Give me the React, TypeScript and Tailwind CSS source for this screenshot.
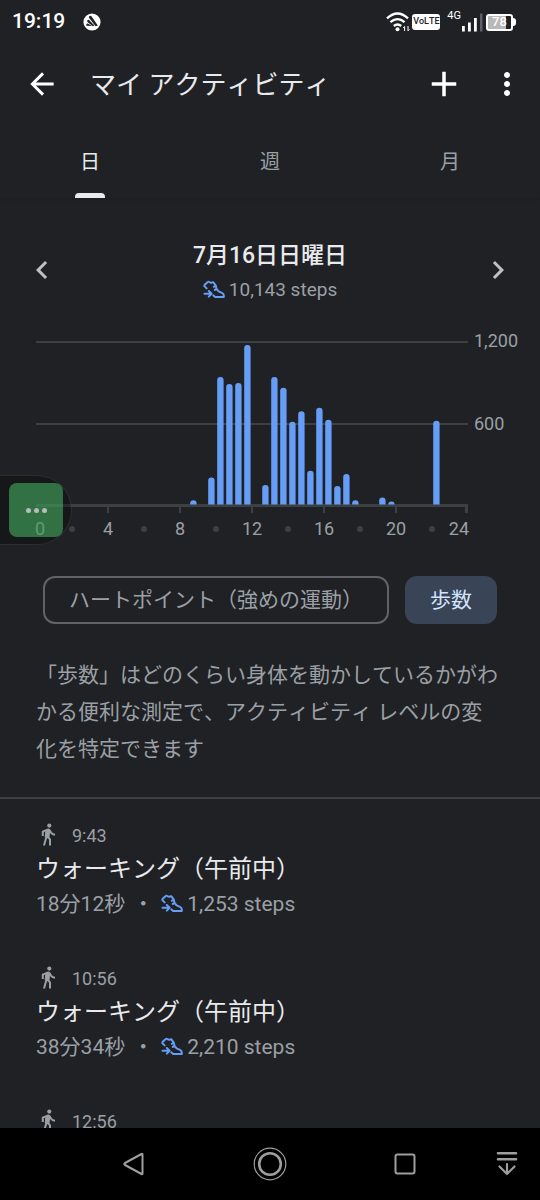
import { MdArrowBack, MdAdd, MdMoreVert, MdChevronLeft, MdChevronRight } from 'react-icons/md';

// steps per half hour slot
const steps = [
  { slot: 17, count: 38 },
  { slot: 19, count: 205 },
  { slot: 20, count: 945 },
  { slot: 21, count: 893 },
  { slot: 22, count: 900 },
  { slot: 23, count: 1180 },
  { slot: 25, count: 150 },
  { slot: 26, count: 945 },
  { slot: 27, count: 865 },
  { slot: 28, count: 615 },
  { slot: 29, count: 693 },
  { slot: 30, count: 255 },
  { slot: 31, count: 718 },
  { slot: 32, count: 630 },
  { slot: 33, count: 143 },
  { slot: 34, count: 232 },
  { slot: 35, count: 38 },
  { slot: 38, count: 58 },
  { slot: 39, count: 30 },
  { slot: 44, count: 623 },
];

type Activity = {
  time: string;
  title?: string;
  duration?: string;
  steps?: string;
};

const activities: Activity[] = [
  { time: '9:43', title: 'ウォーキング（午前中）', duration: '18分12秒', steps: '1,253' },
  { time: '10:56', title: 'ウォーキング（午前中）', duration: '38分34秒', steps: '2,210' },
  { time: '12:56' },
];

function ShoeIcon() {
  return (
    <svg
      viewBox="0 0 22 20"
      className="w-[22px] h-5 shrink-0"
      fill="none"
      stroke="#669df6"
      strokeWidth="2"
      strokeLinecap="round"
      strokeLinejoin="round"
      aria-hidden="true"
    >
      <path d="M3.6 8.4 1.6 6.4Q1 5.6 1.7 4.8L4.8 2Q5.6 1.4 6.3 2 8 3.3 10.200 2.200L12.800 5.600 10.800 6.800M12.800 5.600 13.500 8.800 11.800 9.900M13.500 8.800 15.600 11.400 19 12.800Q20.800 13.600 20.800 15.400V17H12.200L10.400 15.400" />
      <path d="M1.500 13.800H8M5.800 11 8.600 13.800 5.800 16.600" />
    </svg>
  );
}

function WalkIcon() {
  return (
    <svg
      viewBox="0 0 24 24"
      className="w-6 h-6 shrink-0"
      fill="none"
      stroke="#9aa0a6"
      strokeWidth="2"
      strokeLinejoin="round"
      aria-hidden="true"
    >
      <circle cx="13.3" cy="2.6" r="2.1" fill="#9aa0a6" stroke="none" />
      <path d="M6.8 13V8.6L11.6 6.6Q13 6.2 13.8 7.6L15 9.6Q16.4 11.5 19 11.7" />
      <path d="M10 7 13.800 8 12.800 15 9.200 14Z" fill="#9aa0a6" strokeWidth="1" />
      <path d="M10.800 12.500 8 22.500M11.500 13.500 14 16.300V22.500" />
    </svg>
  );
}

function StatusBar() {
  return (
    <div className="flex items-center h-11 pl-3 pr-6 text-white shrink-0">
      <span className="text-[21px] font-medium">19:19</span>
      <svg viewBox="0 0 18 18" className="w-[18px] h-[18px] ml-[18px]" aria-hidden="true">
        <circle cx="9" cy="9" r="8.6" fill="#fff" />
        <path d="M6.2 3.2Q7.6 2.2 8.6 3.6L14.8 12.4 12.6 13.2 6.4 5.2Q5.4 4 6.2 3.2ZM4.4 7.2Q5.4 6.2 6.6 7.4L11.4 12.6 10 13.2 5 9.4Q3.6 8.4 4.4 7.2ZM3.4 11.2Q4 10.2 5.2 10.8L9 13 3.8 12.8Q2.8 12.2 3.4 11.2Z" fill="#202124" />
      </svg>
      <div className="flex items-center ml-auto">
        <svg viewBox="0 0 25 20" className="w-[25px] h-5" fill="none" stroke="#fff" aria-hidden="true">
          <path d="M1 6.4Q11.5-3.4 22 6.4M4.4 10.2Q11.5 4 18.6 10.2M7.8 14Q11.5 11 15.2 14" strokeWidth="2.3" />
          <circle cx="11.5" cy="17.2" r="2" fill="#fff" stroke="none" />
          <path d="M18.6 19V14.5L17.2 16M22 14V18.8L23.4 17.3" strokeWidth="1" />
        </svg>
        <span className="flex items-center justify-center w-7 h-4 ml-px rounded-[3px] bg-white text-[#202124] text-[9px] font-medium">
          VoLTE
        </span>
        <span className="ml-[7px] mb-3 text-[11px] leading-3">4G</span>
        <svg viewBox="0 0 22 20" className="w-[22px] h-5" aria-hidden="true">
          <path d="M1 14H3.8V19.5H1ZM7 10.5H9.8V19.5H7ZM13 6H15.8V19.5H13Z" fill="#fff" />
          <path d="M19 1.5H21.5V19.5H19Z" fill="#5f6064" />
        </svg>
        <div className="flex items-center ml-[3px]">
          <div className="flex items-center justify-center w-[27px] h-[17px] border-2 border-white rounded-[3px] bg-linear-to-r from-[#b8b8b8] from-80% to-[#202124] to-80% text-[13px] font-medium">
            78
          </div>
          <div className="w-[3px] h-2 bg-white rounded-r-sm" />
        </div>
      </div>
    </div>
  );
}

function StepsChart() {
  const labels = [4, 8, 12, 16, 20];
  const dots = [2, 6, 10, 14, 18, 22];

  return (
    <div className="relative">
      <svg viewBox="0 0 540 220" className="block w-full" role="img" aria-label="歩数">
        <g fill="#3c4043">
          <rect x="36" y="11" width="432" height="2" />
          <rect x="36" y="93" width="432" height="2" />
          <rect x="36" y="174" width="432" height="3" />
          {labels.map((hour) => (
            <rect key={hour} x={35 + hour * 18} y="177" width="2" height="6" />
          ))}
          <rect x="465" y="177" width="3" height="6" />
          {dots.map((hour) => (
            <circle key={hour} cx={36 + hour * 18} cy="199" r="3" />
          ))}
        </g>
        <g fill="#669df6">
          {steps.map(({ slot, count }) => {
            const x = 37.2 + slot * 9;
            const top = 175.5 - count * 0.136;
            return <path key={slot} d={`M${x} 174.5V${top + 3}a3.2 3 0 0 1 6.4 0V174.5Z`} />;
          })}
        </g>
        <g fill="#9aa0a6" fontSize="18">
          <text x="474" y="17">1,200</text>
          <text x="474" y="100">600</text>
          <text x="35" y="205">0</text>
          {labels.map((hour) => (
            <text key={hour} x={36 + hour * 18} y="205" textAnchor="middle">{hour}</text>
          ))}
          <text x="469" y="205" textAnchor="end">24</text>
        </g>
      </svg>

      {/* floating assistant bubble */}
      <div className="absolute left-0 bottom-[5px] flex items-center justify-end w-[72px] h-[70px] pr-2 rounded-r-full border border-l-0 border-white/10 bg-black/30">
        <button aria-label="メニュー" className="flex items-center justify-center gap-[3px] w-[54px] h-[54px] rounded-lg bg-[#4bcb6e]/50">
          <span className="w-[5px] h-[5px] rounded-full bg-[#b3bfb5]" />
          <span className="w-[5px] h-[5px] rounded-full bg-[#b3bfb5]" />
          <span className="w-[5px] h-[5px] rounded-full bg-[#b3bfb5]" />
        </button>
      </div>
    </div>
  );
}

function NavBar() {
  return (
    <nav className="flex items-center h-[72px] pl-[66px] bg-black shrink-0">
      <button aria-label="戻る" className="flex flex-1 justify-center">
        <svg viewBox="0 0 24 24" className="w-6 h-6" fill="none" stroke="#9e9e9e" strokeWidth="2" strokeLinejoin="round">
          <path d="M20.5 2.5V21.5Q20.5 22.5 19.5 22L3 13Q1.6 12 3 11L19.5 2Q20.5 1.5 20.5 2.5Z" />
        </svg>
      </button>
      <button aria-label="ホーム" className="flex flex-1 justify-center">
        <svg viewBox="0 0 34 34" className="w-[34px] h-[34px]" fill="none" stroke="#9e9e9e">
          <circle cx="17" cy="17" r="15.8" strokeWidth="1.2" />
          <circle cx="17" cy="17" r="10.8" strokeWidth="2.6" />
        </svg>
      </button>
      <button aria-label="履歴" className="flex flex-1 justify-center">
        <svg viewBox="0 0 24 24" className="w-6 h-6" fill="none" stroke="#9e9e9e" strokeWidth="2">
          <rect x="2.5" y="2.5" width="19" height="19" rx="2" />
        </svg>
      </button>
      <button aria-label="通知" className="flex justify-center w-[67px]">
        <svg viewBox="0 0 24 26" className="w-6 h-[26px]" fill="none" stroke="#9e9e9e" strokeWidth="2.6" strokeLinecap="round">
          <path d="M3 2.3H21M3 8.3H21" />
          <path d="M12 13V23M4.5 15.5 12 23 19.5 15.5" strokeWidth="2.2" strokeLinejoin="round" />
        </svg>
      </button>
    </nav>
  );
}

export default function App() {
  return (
    <div
      lang="ja"
      className="flex flex-col h-screen overflow-hidden bg-[#202124] text-[#e8eaed] font-[Roboto,'Noto_Sans_CJK_JP',sans-serif] [font-kerning:none]"
    >
      <StatusBar />

      <header className="flex items-center h-20 pl-7 pr-[15px] shrink-0">
        <button aria-label="戻る">
          <MdArrowBack className="w-7 h-9 scale-125 text-white" />
        </button>
        <h1 className="ml-[34px] pt-0.5 text-[26px] leading-9">マイ アクティビティ</h1>
        <button aria-label="追加" className="ml-auto">
          <MdAdd className="w-[42px] h-[42px] text-white" />
        </button>
        <button aria-label="その他" className="ml-6">
          <MdMoreVert className="w-9 h-9 text-white" />
        </button>
      </header>

      <div role="tablist" className="grid grid-cols-3 h-[74px] text-[20px] text-[#9aa0a6] shadow-sm shrink-0">
        <button role="tab" aria-selected="true" className="relative pt-0.5 text-[#e8eaed]">
          日
          <span className="absolute bottom-0 left-1/2 -translate-x-1/2 w-[30px] h-[5px] rounded-t bg-[#e8eaed]" />
        </button>
        <button role="tab" aria-selected="false" className="pt-0.5">週</button>
        <button role="tab" aria-selected="false" className="pt-0.5">月</button>
      </div>

      <main className="flex-1 min-h-0 overflow-hidden">
        <section className="pt-[38px]">
          <div className="flex items-center justify-between px-6 h-[68px]">
            <button aria-label="前の日">
              <MdChevronLeft className="w-9 h-9 text-[#bdc1c6]" />
            </button>
            <div className="flex flex-col items-center pt-1">
              <h2 className="text-[23px] leading-9 font-medium">7月16日日曜日</h2>
              <div className="flex items-center gap-1 text-[19px] leading-8 text-[#9aa0a6]">
                <ShoeIcon />
                10,143 steps
              </div>
            </div>
            <button aria-label="次の日">
              <MdChevronRight className="w-9 h-9 text-[#bdc1c6]" />
            </button>
          </div>

          <div className="mt-[26px]">
            <StepsChart />
          </div>

          <div className="flex gap-4 px-[43px] mt-[26px] text-[21px]">
            <button className="h-12 pt-0.5 px-6 border-2 border-[#5f6368] rounded-xl text-[#9aa0a6] whitespace-nowrap">
              ハートポイント（強めの運動）
            </button>
            <button className="h-12 pt-0.5 px-[25px] rounded-xl bg-[#394457] text-[#d2e3fc] whitespace-nowrap">
              歩数
            </button>
          </div>

          <p className="pl-9 pr-10 mt-[33px] pb-[29px] text-[21px] leading-[37px] text-[#9aa0a6] border-b-2 border-[#3c4043]">
            「歩数」はどのくらい身体を動かしているかがわかる便利な測定で、アクティビティ レベルの変化を特定できます
          </p>
        </section>

        <ul className="flex flex-col gap-[46px] px-9 pt-6">
          {activities.map((activity) => (
            <li key={activity.time}>
              <div className="flex items-center gap-3 h-6 text-[18px] text-[#9aa0a6]">
                <WalkIcon />
                {activity.time}
              </div>
              {activity.title && <h3 className="mt-1 text-[24px] leading-9">{activity.title}</h3>}
              {activity.steps && (
                <div className="flex items-center mt-px text-[21px] leading-8 text-[#9aa0a6]">
                  {activity.duration}
                  <span className="w-9 text-center">・</span>
                  <ShoeIcon />
                  <span className="ml-1">{activity.steps} steps</span>
                </div>
              )}
            </li>
          ))}
        </ul>
      </main>

      <NavBar />
    </div>
  );
}
